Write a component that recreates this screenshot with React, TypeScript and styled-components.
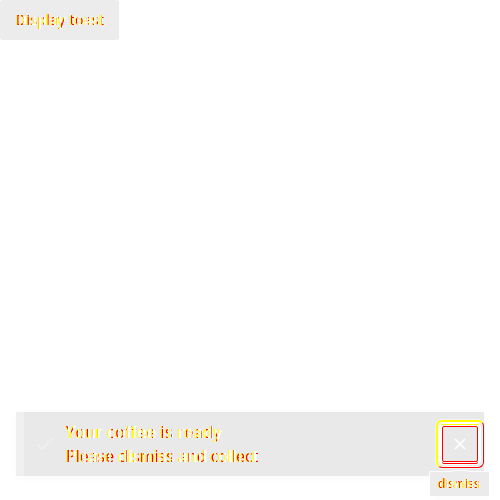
import React from 'react';
import styled, { createGlobalStyle } from 'styled-components';

const GlobalStyle = createGlobalStyle`
  * { box-sizing: border-box; }
  body { margin: 0; background: #fff; font-family: "Open Sans", sans-serif; }
`;
const Page = styled.main`
  height: 500px;
  display: flex;
  flex-direction: column;
  justify-content: space-between;
  align-items: flex-start;
  overflow: hidden;
`;
const Trigger = styled.button`
  height: 40px;
  width: 119px;
  padding: 0 0 2px 16px;
  border: 0;
  border-radius: 3px;
  background: #ececec;
  text-align: left;
  font-family: inherit;
`;
const DiffText = styled.span<{ $size: number; $weight?: number; $red?: number; $tracking?: number }>`
  display: block;
  width: max-content;
  font-size: ${p => p.$size}px;
  font-weight: ${p => p.$weight ?? 400};
  letter-spacing: ${p => p.$tracking ?? 0}px;
  white-space: nowrap;
  color: transparent;
  background:
    repeating-linear-gradient(90deg, transparent 0 4px, #ff0 4px 5px, transparent 5px 7px, #fff 7px 9px),
    repeating-linear-gradient(90deg, red 0 ${p => p.$red ?? 3}px, #fff ${p => p.$red ?? 3}px 5px);
  background-clip: text;
  -webkit-background-clip: text;
  filter: drop-shadow(1px 0 0 #ffffff) drop-shadow(-1px 0 0 #ffff00);
`;
const Toast = styled.section`
  position: relative;
  width: 468px;
  height: 64px;
  margin: 0 16px 24px;
  padding: 8px 6px 8px 12px;
  display: flex;
  align-items: center;
  border-left: 8px solid #f0f0f0;
  background: #e9e9e9;
  box-shadow: 0 2px 8px rgba(0, 0, 0, 0.025);
`;
const Message = styled.div`
  margin-left: 12px;
  flex: 1;
  line-height: 24px;
`;
const Dismiss = styled.button`
  width: 36px;
  height: 36px;
  padding: 0;
  display: flex;
  align-items: center;
  justify-content: center;
  background: #e9e9e9;
  border: 1px solid red;
  border-radius: 2px;
  position: relative;
  box-shadow: 0 1px 0 #fff, 0 2px 0 red, 0 0 0 3px #fff;
  &::before, &::after {
    content: '';
    position: absolute;
    border-style: solid;
  }
  &::before {
    inset: -7px;
    border-width: 2px 1px 1px 2px;
    border-color: #ff0 red red #ff0;
    border-radius: 6px;
    box-shadow: 0 0 0 1px #f4f4f4, inset 0 0 0 1px #fff;
  }
  &::after {
    inset: -3px -3px 0;
    border-width: 1px 1px 0;
    border-color: #ff0 #fff #fff #fff;
    border-radius: 3px 3px 0 0;
  }
`;
const Tooltip = styled.div`
  position: absolute;
  top: 60px;
  left: 406px;
  width: 59px;
  height: 24px;
  padding-left: 8px;
  border-radius: 1px;
  line-height: 23px;
  background: #ebebeb;
  box-shadow: 0 0 0 1px #fff, 0 2px 7px rgba(0, 0, 0, 0.025);
  &::before {
    content: '';
    position: absolute;
    top: -2px;
    left: 22px;
    width: 16px;
    height: 2px;
    background: #ebebeb;
    border-top: 1px solid #fff;
  }
`;

export default function App() {
  return (
    <Page>
      <GlobalStyle />
      <Trigger><DiffText $size={14} $weight={500} $red={3} $tracking={0.35}>Display toast</DiffText></Trigger>
      <Toast>
        <svg width="18" height="14" viewBox="0 0 18 14" fill="none"><path d="M1 7l5 5L17 1" stroke="#f0f0f0" strokeWidth="1.6" /></svg>
        <Message>
          <DiffText $size={16} $weight={500} $red={2} $tracking={0.43}>Your coffee is ready</DiffText>
          <DiffText $size={16} $red={3}>Please dismiss and collect</DiffText>
        </Message>
        <Dismiss aria-label="dismiss"><svg width="12" height="12" viewBox="0 0 12 12" fill="none"><path d="M1 1l10 10M11 1L1 11" stroke="#fff" strokeWidth="1.7" /></svg></Dismiss>
        <Tooltip role="tooltip"><DiffText $size={12} $red={4} $weight={500}>dismiss</DiffText></Tooltip>
      </Toast>
    </Page>
  );
}
